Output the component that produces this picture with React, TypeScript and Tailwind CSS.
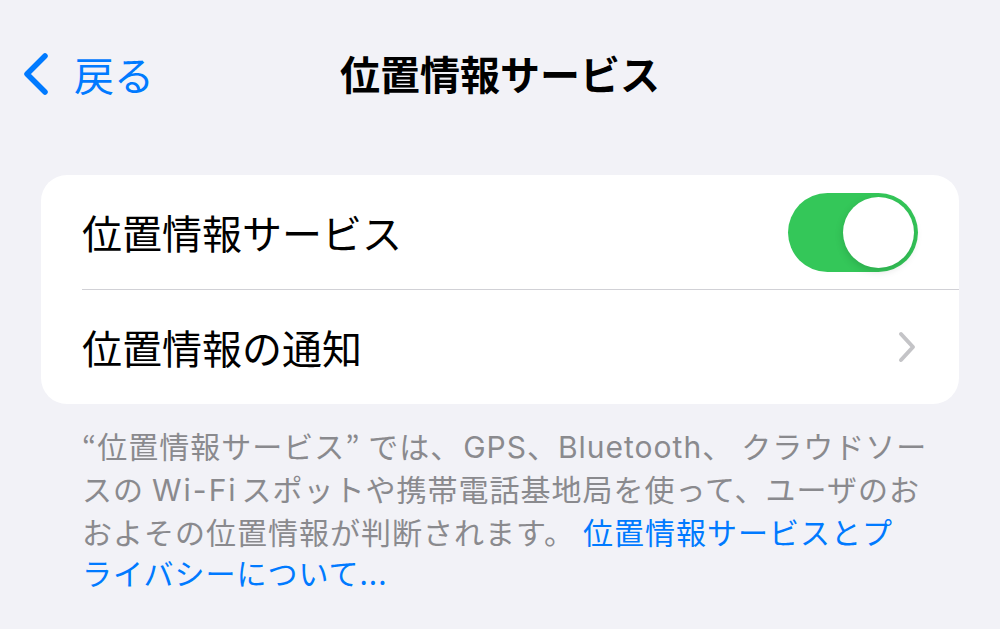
import React from 'react';

const jp = { fontFamily: '"Noto Sans CJK JP", "Noto Sans", sans-serif' };

const BackChevron = () => (
  <svg width="30" height="44" viewBox="0 0 30 44" fill="none">
    <path d="M24 4 L6 22 L24 40" stroke="#007aff" strokeWidth="5.5" strokeLinecap="round" strokeLinejoin="round" />
  </svg>
);

const RowChevron = () => (
  <svg width="22" height="32" viewBox="0 0 22 32" fill="none">
    <path d="M5 3 L17 16 L5 29" stroke="#c4c4c7" strokeWidth="4" strokeLinecap="round" strokeLinejoin="round" />
  </svg>
);

const Toggle = () => (
  <div className="w-[130px] h-[79px] rounded-full bg-[#34c759] p-[4px] flex justify-end items-center">
    <div className="w-[71px] h-[71px] rounded-full bg-white shadow-[0_3px_8px_rgba(0,0,0,0.15)]" />
  </div>
);

// Latin words in the footer are set a little wider, as in the system font
const Latin = ({ children, className = '' }: { children: React.ReactNode; className?: string }) => (
  <span className={`font-['Inter',sans-serif] ${className}`}>{children}</span>
);

export default function App() {
  return (
    <div className="w-[1000px] h-[629px] bg-[#f2f2f7] overflow-hidden" style={jp}>
      {/* Nav bar */}
      <div className="relative h-[150px] flex items-start pt-[51px]">
        <div className="flex items-center pl-[21px] gap-[23px] text-[#007aff] text-[40px] leading-[46px]">
          <BackChevron />
          <span>戻る</span>
        </div>
        <div className="absolute left-0 right-0 top-[50px] text-center text-[40px] leading-[46px] font-bold text-black">
          位置情報サービス
        </div>
      </div>

      {/* Card */}
      <div className="mx-[41px] mt-[25px] bg-white rounded-[26px]">
        <div className="h-[114px] flex items-center justify-between pl-[41px] pr-[41px]">
          <span className="text-[40px] text-black">位置情報サービス</span>
          <Toggle />
        </div>
        <div className="ml-[41px] h-px bg-[#d1d1d6]" />
        <div className="h-[114px] flex items-center justify-between pl-[41px] pr-[41px]">
          <span className="text-[40px] text-black">位置情報の通知</span>
          <RowChevron />
        </div>
      </div>

      {/* Footer */}
      <div className="pl-[82px] pt-[21px] text-[30px] leading-[41px] tracking-[1px] text-[#8a8a8e]">
        <div className="whitespace-nowrap">
          “位置情報サービス” では、<Latin className="ml-[2px]">GPS</Latin>、<Latin>Bluetooth</Latin>、<span className="ml-[8px]">クラウドソー</span>
        </div>
        <div className="whitespace-nowrap">
          スの<Latin className="ml-[8px] mr-[4px] tracking-[2px]">Wi-Fi</Latin>スポットや携帯電話基地局を使って、ユーザのお
        </div>
        <div className="whitespace-nowrap">
          およその位置情報が判断されます。<span className="ml-[8px] text-[#007aff]">位置情報サービスとプ</span>
        </div>
        <div className="whitespace-nowrap text-[#007aff]">
          ライバシーについて<span className="tracking-[1px]">...</span>
        </div>
      </div>
    </div>
  );
}
